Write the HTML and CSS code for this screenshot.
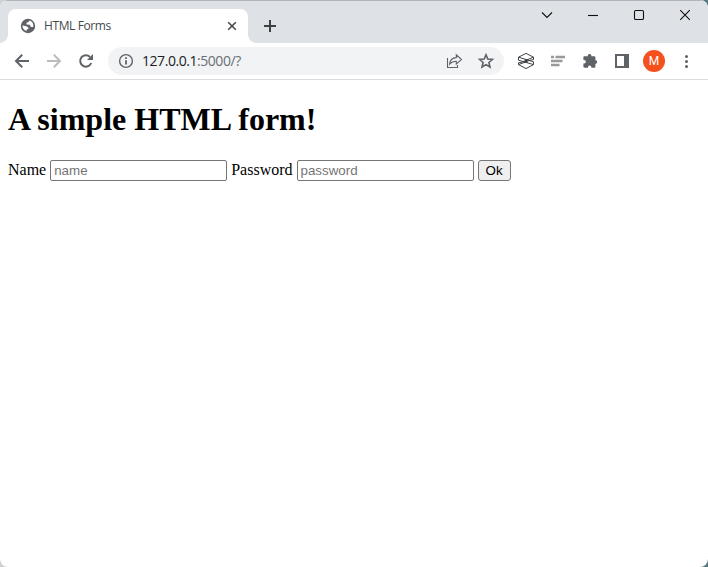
FILE: index.html
```html
<!DOCTYPE html>
<html lang="en">
<head>
<meta charset="utf-8">
<title>HTML Forms</title>
<link rel="stylesheet" href="styles.css">
</head>
<body>
<div class="window">
  <header class="tabstrip">
    <div class="tab">
      <svg class="favicon" width="16" height="16" viewBox="0 0 16 16"><circle cx="8" cy="8" r="7.2" fill="#5f6368"/><path d="M2.4 7.6 6.4 8.2 8.8 9.9 7.8 11.2H6.7V13C4 12.6 2.4 10.4 2.4 7.6ZM9.6 2.6 8.2 4.2 6.4 4.8 6.6 6.4 9.6 6.8 11 8.9 13.1 9.1C14.1 6.3 12.3 3.5 9.6 2.6Z" fill="#fff"/></svg>
      <span class="tab-title">HTML Forms</span>
      <svg class="tab-close" width="16" height="16" viewBox="0 0 16 16"><path d="m4.2 4.2 7.6 7.6m0-7.6-7.6 7.6" stroke="#45494d" stroke-width="1.6"/></svg>
    </div>
    <svg class="new-tab" width="16" height="16" viewBox="0 0 16 16"><path d="M8 2v12M2 8h12" stroke="#3c4043" stroke-width="2"/></svg>
    <div class="controls">
      <svg width="46" height="30" viewBox="0 0 46 30"><path d="m18 12.5 5 5 5-5"/></svg>
      <svg width="46" height="30" viewBox="0 0 46 30"><path d="M18 15.5h10"/></svg>
      <svg width="46" height="30" viewBox="0 0 46 30"><rect x="18.5" y="10.5" width="9" height="9" rx="1.3"/></svg>
      <svg width="46" height="30" viewBox="0 0 46 30"><path d="m18.2 10.2 9.6 9.6m0-9.6-9.6 9.6"/></svg>
    </div>
  </header>
  <nav class="toolbar">
    <svg class="tool" viewBox="0 0 32 32"><path d="M23 16H11M16.2 9.8 10 16l6.2 6.2" fill="none" stroke="#5f6368" stroke-width="2"/></svg>
    <svg class="tool" viewBox="0 0 32 32"><path d="M9 16h12M15.8 9.8 22 16l-6.2 6.2" fill="none" stroke="#babcbe" stroke-width="2"/></svg>
    <svg class="tool" viewBox="0 0 32 32"><path d="M21.2 18A5.7 5.7 0 1 1 20 12" fill="none" stroke="#5f6368" stroke-width="2"/><path d="M23 9v6h-6Z" fill="#5f6368"/></svg>
    <div class="omnibox">
      <svg class="info" width="16" height="16" viewBox="0 0 16 16"><circle cx="8" cy="8" r="6.4" fill="none" stroke="#5f6368" stroke-width="1.4"/><path d="M8 7.2v4.3M8 4.2v1.7" stroke="#5f6368" stroke-width="1.8"/></svg>
      <span class="url">127.0.0.1<span class="path">:5000/?</span></span>
      <svg class="tool" viewBox="0 0 32 32"><path d="M9.5 13v9.5h10V20M11.6 19.1c.3-3.9 2.5-6.2 6.7-6.5V9.8l5.2 4.7-5.2 4.6v-2.8c-3.1 0-5.1.8-6.7 2.8Z" fill="none" stroke="#5f6368" stroke-width="1.1"/></svg>
      <svg class="tool" viewBox="0 0 32 32"><path d="m16 9.9 1.8 4.2 4.6.4-3.5 3 1.1 4.5-4-2.4-4 2.4 1.1-4.5-3.5-3 4.6-.4Z" fill="none" stroke="#5f6368" stroke-width="1.6"/></svg>
    </div>
    <svg class="tool" viewBox="0 0 32 32"><path d="M23.5 12.2 16 8.4l-7.5 3.8v3L23.5 19.6 16 23.6l-7.5-4M8.5 12.2l15 4.6v2.8M23.5 12.2l-7.5 3M23.5 12.2v2.4l-15 3.2v1.8l7.5-2.8" fill="none" stroke="#3f4246" stroke-width="1"/><path d="M14.5 14.4h3v3.4h-3Z" fill="#3f4246"/></svg>
    <svg class="tool" viewBox="0 0 32 32"><path d="M9 12h3M13.5 12H23M9 16h11.5M9 20h8.5" fill="none" stroke="#999" stroke-width="2.4"/></svg>
    <svg class="tool" viewBox="0 0 32 32"><path d="M10.2 11.3h3.6V10.4a1.9 1.9 0 0 1 3.6 0v.9h2.8q1.2 0 1.2 1v3h.6a1.8 1.8 0 0 1 0 3.4h-.6v3q0 1.1-1.1 1.1h-2.9v-.6a1.7 1.7 0 0 0-3.4 0v.6h-3.2q-1.4 0-1.4-1.3v-2.9h.7a1.8 1.8 0 0 0 0-3.6h-.7v-2.6q0-1.1.8-1.1Z" fill="#5f6368"/></svg>
    <svg class="tool" viewBox="0 0 32 32"><path d="M9 9h14v14H9Zm2 2v10h7V11Z" fill="#5f6368" fill-rule="evenodd"/></svg>
    <span class="profile"><span class="avatar">M</span></span>
    <svg class="tool" viewBox="0 0 32 32"><g fill="#5f6368"><circle cx="16.5" cy="11.5" r="1.5"/><circle cx="16.5" cy="16.5" r="1.5"/><circle cx="16.5" cy="21.5" r="1.5"/></g></svg>
  </nav>
  <main class="page">
    <h1>A simple HTML form!</h1>
    <form>
      <label for="name">Name</label>
      <input id="name" type="text" placeholder="name">
      <label for="password">Password</label>
      <input id="password" type="password" placeholder="password">
      <button type="button">Ok</button>
    </form>
  </main>
</div>
</body>
</html>
```
FILE: styles.css
```css
* { box-sizing: border-box; }
body { margin: 0; background: linear-gradient(90deg, #d0d0d0 50%, #587880 50%); }
svg { display: block; flex: none; }
.window {
  height: 567px;
  display: flex;
  flex-direction: column;
  background: #fff;
  border-radius: 8px;
  overflow: hidden;
}
.tabstrip {
  height: 43px;
  flex: none;
  display: flex;
  padding-left: 8px;
  background: #dee1e6;
  border-top: 1px solid #b3b4b7;
}
.tab {
  position: relative;
  width: 240px;
  height: 34px;
  margin-top: 8px;
  padding: 0 8px 0 12px;
  display: flex;
  align-items: center;
  background: #fff;
  border-radius: 8px 8px 0 0;
}
.tab::before, .tab::after {
  content: "";
  position: absolute;
  bottom: 0;
  width: 8px;
  height: 8px;
}
.tab::before { left: -8px; background: radial-gradient(circle at 0 0, transparent 7.5px, #fff 8px); }
.tab::after { right: -8px; background: radial-gradient(circle at 100% 0, transparent 7.5px, #fff 8px); }
.tab-title {
  flex: 1;
  margin-left: 8px;
  font: 12px/16px "Open Sans", sans-serif;
  letter-spacing: -0.4px;
  color: #45494d;
}
.new-tab { margin: 17px 0 0 14px; }
.controls { display: flex; margin: -1px 0 0 auto; }
.controls path, .controls rect { fill: none; stroke: #111; stroke-width: 1.1; }
.toolbar {
  height: 37px;
  flex: none;
  display: flex;
  align-items: center;
  padding: 0 6px;
  border-bottom: 1px solid #dadce0;
}
.tool { width: 32px; height: 32px; }
.omnibox {
  flex: 1;
  height: 28px;
  margin: 0 6px;
  padding: 0 2px 0 10px;
  display: flex;
  align-items: center;
  background: #f1f3f4;
  border-radius: 14px;
}
.url {
  flex: 1;
  margin-left: 8px;
  font: 14px/20px "Open Sans", sans-serif;
  letter-spacing: -0.45px;
  color: #202124;
}
.path { color: #6b6f74; }
.profile { width: 32px; display: flex; justify-content: center; }
.avatar {
  width: 22px;
  height: 22px;
  border-radius: 50%;
  background: #f4511e;
  color: #fff;
  font: 12px/23px Roboto, sans-serif;
  text-align: center;
}
.page {
  flex: 1;
  padding: 0 8px;
  font: 16px "Liberation Serif", serif;
  color: #000;
}
h1 { margin: 21px 0 22px; font-size: 32px; line-height: 37px; }
form { white-space: nowrap; }
input, button { font: 13.333px "Liberation Sans", sans-serif; height: 21px; margin: 0; }
input {
  width: 177px;
  padding: 1px 2px 1px 3px;
  border: 1px solid #767676;
  border-radius: 2px;
  background: #fff;
}
input::placeholder { color: #757575; }
button {
  width: 33px;
  padding: 0;
  border: 1px solid #767676;
  border-radius: 3px;
  background: #efefef;
  color: #000;
}
```
